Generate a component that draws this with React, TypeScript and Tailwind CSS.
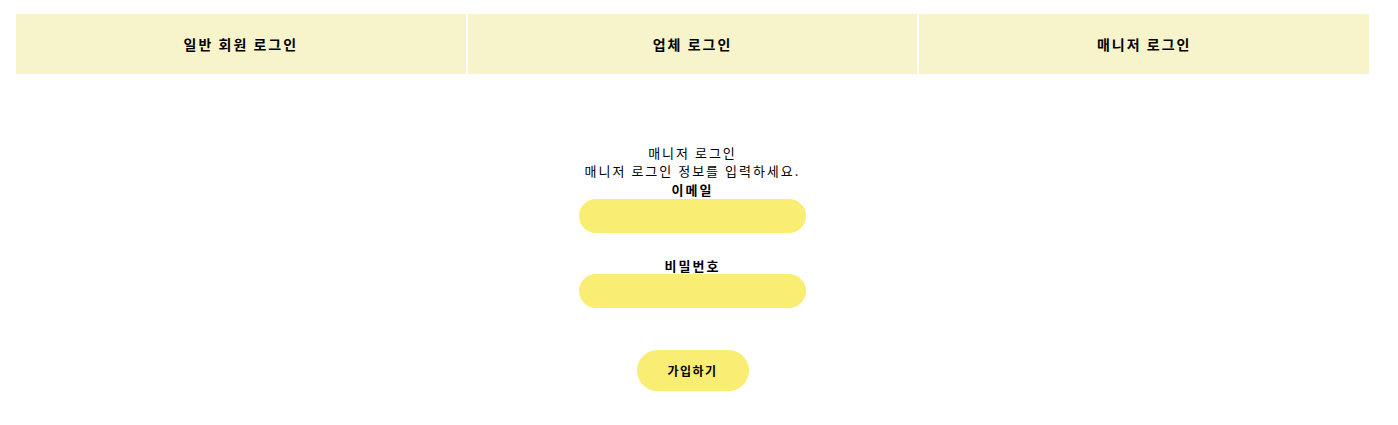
import React from "react";

export default function App() {
  const font = { fontFamily: '"Noto Sans CJK KR", "Noto Sans", sans-serif' };
  return (
    <div className="w-[1385px] h-[425px] bg-white text-black" style={font}>
      <div className="pt-[14px] px-4 flex gap-[2px]">
        {["일반 회원 로그인", "업체 로그인", "매니저 로그인"].map((t) => (
          <div
            key={t}
            className="flex-1 h-[60px] bg-[#f7f4cc] flex items-center justify-center text-[14px] font-bold tracking-[2px]"
          >
            {t}
          </div>
        ))}
      </div>
      <div className="flex flex-col items-center pt-[70px] tracking-[2px]">
        <div className="text-[13px] leading-[18px]">매니저 로그인</div>
        <div className="text-[13px] leading-[18px]">매니저 로그인 정보를 입력하세요.</div>
        <label className="text-[13px] leading-[19px] font-bold">이메일</label>
        <input className="w-[227px] h-[34px] rounded-full bg-[#f9ee73] outline-none" />
        <label className="mt-[24px] text-[13px] leading-[17px] font-bold">비밀번호</label>
        <input
          type="password"
          className="w-[227px] h-[34px] rounded-full bg-[#f9ee73] outline-none"
        />
        <button className="mt-[42px] w-[112px] h-[41px] rounded-full bg-[#f9ee73] text-[12px] font-bold tracking-[1.5px]">
          가입하기
        </button>
      </div>
    </div>
  );
}
